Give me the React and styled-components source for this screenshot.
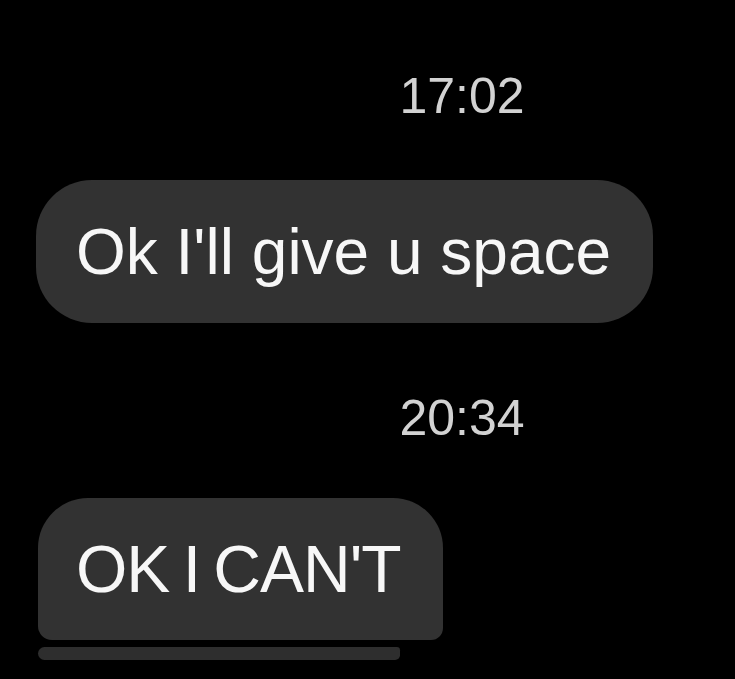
import { createGlobalStyle, styled } from "styled-components";

const GlobalStyle = createGlobalStyle`
  html, body {
    margin: 0;
    padding: 0;
    background: #000000;
  }
  body {
    font-family: "Liberation Sans", Arial, sans-serif;
  }
`;

const Thread = styled.div`
  width: 735px;
  height: 679px;
  overflow: hidden;
  background: #000000;
  display: flex;
  flex-direction: column;
  align-items: flex-start;
  padding-top: 72px;
  box-sizing: border-box;
`;

const Stamp = styled.div`
  width: 200px;
  margin-left: 362px;
  margin-top: ${(p) => p.$top || 0}px;
  text-align: center;
  font-size: 50px;
  line-height: 49px;
  color: #d2d2d2;
`;

const Bubble = styled.div`
  margin-left: ${(p) => p.$left}px;
  margin-top: ${(p) => p.$top}px;
  height: ${(p) => p.$height}px;
  padding: 0 ${(p) => p.$padRight}px 0 ${(p) => p.$padLeft}px;
  display: flex;
  align-items: center;
  background: #323232;
  color: #f7f7f7;
  font-size: ${(p) => p.$size}px;
  line-height: 1;
  letter-spacing: ${(p) => p.$spacing || 0}px;
  word-spacing: ${(p) => p.$wordSpacing || 0}px;
  white-space: nowrap;
  border-radius: ${(p) => p.$radius};
  box-sizing: border-box;
`;

const Strip = styled.div`
  margin-left: 38px;
  margin-top: 7px;
  width: 362px;
  height: 13px;
  background: #2e2e2e;
  border-radius: 8px 4px 6px 8px;
`;

const App = () => {
  return (
    <>
      <GlobalStyle />
      <Thread>
        <Stamp>17:02</Stamp>
        <Bubble
          $left={36}
          $top={59}
          $height={143}
          $padLeft={40}
          $padRight={42}
          $size={64}
          $radius="56px"
        >
          Ok I'll give u space
        </Bubble>
        <Stamp $top={71}>20:34</Stamp>
        <Bubble
          $left={38}
          $top={55}
          $height={142}
          $padLeft={38}
          $padRight={42}
          $size={66}
          $spacing={-1}
          $wordSpacing={-4}
          $radius="50px 50px 12px 14px"
        >
          OK I CAN'T
        </Bubble>
        <Strip />
      </Thread>
    </>
  );
};

export default App;
